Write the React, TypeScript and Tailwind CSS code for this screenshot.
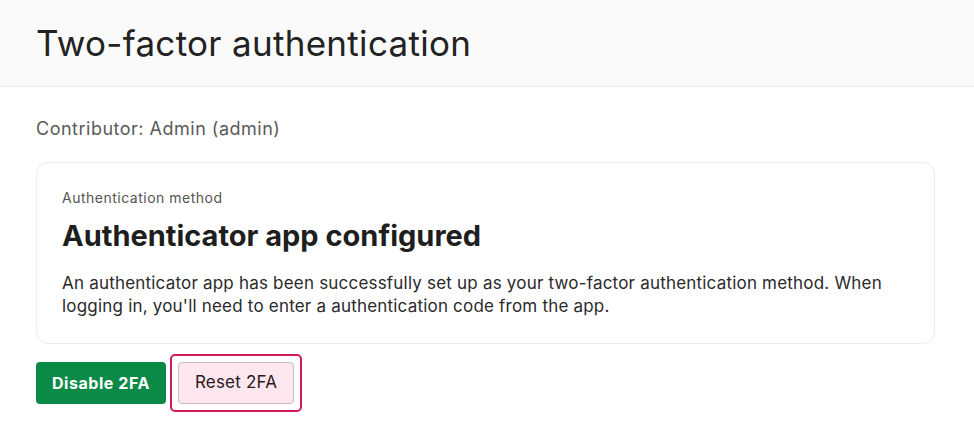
import React from 'react';

export default function App() {
  return (
    <div className="min-h-[440px] bg-white text-[#212121]" style={{ fontFamily: 'Inter, "Noto Sans", sans-serif' }}>
      {/* Page header */}
      <header className="h-[87px] bg-[#fafafa] border-b border-[#e8e8e8] px-9 flex items-center">
        <h1 className="text-[35px] leading-none tracking-[0.3px] text-[#222]">Two-factor authentication</h1>
      </header>

      <main className="px-9 pt-[30px]">
        <p className="text-[18px] leading-[24px] tracking-[0.5px] text-[#5a5a5a]">Contributor: Admin (admin)</p>

        <section className="mt-[21px] w-[899px] rounded-[12px] border border-[#ececec] px-[25px] pt-[26px] pb-[25px]">
          <p className="text-[14px] leading-[18px] tracking-[0.5px] text-[#555]">Authentication method</p>
          <h2 className="mt-[11px] text-[29px] leading-[36px] font-bold text-[#1e1e1e]">Authenticator app configured</h2>
          <p className="mt-[18px] text-[17px] leading-[23px] tracking-[0.2px] text-[#2a2a2a]">
            An authenticator app has been successfully set up as your two-factor authentication method. When logging in, you'll need to enter a authentication code from the app.
          </p>
        </section>

        <div className="mt-[10px] flex items-center gap-[4px]">
          <button className="h-[42px] px-4 rounded-[4px] bg-[#0b8a47] text-white text-[16px] tracking-[0.55px] font-bold">Disable 2FA</button>
          <div className="rounded-[5px] border-2 border-[#d1195f] p-[6px]">
            <button className="h-[42px] px-4 rounded-[4px] bg-[#fde6ee] border border-[#c9bcc1] text-[#2a1a20] text-[17px] tracking-[0.2px]">Reset 2FA</button>
          </div>
        </div>
      </main>
    </div>
  );
}
